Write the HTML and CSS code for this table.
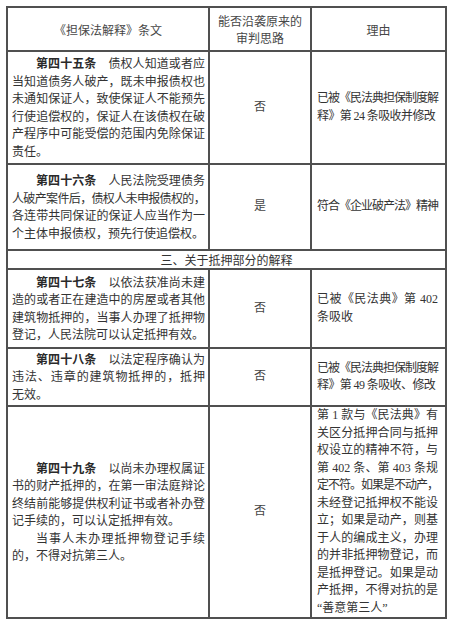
FILE: index.html
```html
<!DOCTYPE html>
<html lang="zh-CN">
<head>
<meta charset="utf-8">
<title>担保法解释条文对照</title>
<link rel="stylesheet" href="styles.css">
</head>
<body>
<div class="sheet">
<table class="grid">
  <colgroup><col class="c1"><col class="c2"><col class="c3"></colgroup>
  <tr class="row-head">
    <th>《担保法解释》条文</th>
    <th>能否沿袭原来的<br>审判思路</th>
    <th>理由</th>
  </tr>
  <tr class="row-45">
    <td class="art">
      <span class="ln ind"><b>第四十五条</b>　债权人知道或者应</span>
      <span class="ln">当知道债务人破产，既未申报债权也</span>
      <span class="ln">未通知保证人，致使保证人不能预先</span>
      <span class="ln">行使追偿权的，保证人在该债权在破</span>
      <span class="ln">产程序中可能受偿的范围内免除保证</span>
      <span class="ln end">责任。</span>
    </td>
    <td class="verdict">否</td>
    <td class="reason">
      <span class="ln t10">已被《民法典担保制度解</span>
      <span class="ln end t05">释》第 24 条吸收并修改</span>
    </td>
  </tr>
  <tr class="row-46">
    <td class="art">
      <span class="ln ind"><b>第四十六条</b>　人民法院受理债务</span>
      <span class="ln t07">人破产案件后，债权人未申报债权的，</span>
      <span class="ln">各连带共同保证的保证人应当作为一</span>
      <span class="ln end">个主体申报债权，预先行使追偿权。</span>
    </td>
    <td class="verdict">是</td>
    <td class="reason">
      <span class="ln t10">符合《企业破产法》精神</span>
    </td>
  </tr>
  <tr class="row-sec">
    <td class="section" colspan="3">三、关于抵押部分的解释</td>
  </tr>
  <tr class="row-47">
    <td class="art">
      <span class="ln ind"><b>第四十七条</b>　以依法获准尚未建</span>
      <span class="ln">造的或者正在建造中的房屋或者其他</span>
      <span class="ln">建筑物抵押的，当事人办理了抵押物</span>
      <span class="ln end">登记，人民法院可以认定抵押有效。</span>
    </td>
    <td class="verdict">否</td>
    <td class="reason">
      <span class="ln">已被《民法典》第 402</span>
      <span class="ln end">条吸收</span>
    </td>
  </tr>
  <tr class="row-48">
    <td class="art">
      <span class="ln ind"><b>第四十八条</b>　以法定程序确认为</span>
      <span class="ln">违法、违章的建筑物抵押的，抵押</span>
      <span class="ln end">无效。</span>
    </td>
    <td class="verdict">否</td>
    <td class="reason">
      <span class="ln t10">已被《民法典担保制度解</span>
      <span class="ln end t05">释》第 49 条吸收、修改</span>
    </td>
  </tr>
  <tr class="row-49">
    <td class="art">
      <span class="ln ind"><b>第四十九条</b>　以尚未办理权属证</span>
      <span class="ln">书的财产抵押的，在第一审法庭辩论</span>
      <span class="ln">终结前能够提供权利证书或者补办登</span>
      <span class="ln end">记手续的，可以认定抵押有效。</span>
      <span class="ln ind">当事人未办理抵押物登记手续</span>
      <span class="ln end">的，不得对抗第三人。</span>
    </td>
    <td class="verdict">否</td>
    <td class="reason">
      <span class="ln">第 1 款与《民法典》有</span>
      <span class="ln">关区分抵押合同与抵押</span>
      <span class="ln">权设立的精神不符，与</span>
      <span class="ln">第 402 条、第 403 条规</span>
      <span class="ln t10">定不符。如果是不动产，</span>
      <span class="ln">未经登记抵押权不能设</span>
      <span class="ln">立；如果是动产，则基</span>
      <span class="ln">于人的编成主义，办理</span>
      <span class="ln">的并非抵押物登记，而</span>
      <span class="ln">是抵押登记。如果是动</span>
      <span class="ln">产抵押，不得对抗的是</span>
      <span class="ln end">“善意第三人”</span>
    </td>
  </tr>
</table>
</div>
</body>
</html>
```

FILE: styles.css
```css
body {
  margin: 0;
  background: #ffffff;
  font-family: "Liberation Serif", "Noto Sans CJK SC", serif;
  color: #333333;
}

.sheet {
  padding: 6px 0 0 6px;
}

.grid {
  border-collapse: collapse;
  table-layout: fixed;
  width: 441px;
  font-size: 12px;
  line-height: 17.5px;
}

.c1 { width: 202px; }
.c2 { width: 102px; }
.c3 { width: 135px; }

.grid th,
.grid td {
  border: 2px solid #505050;
  padding: 0;
  vertical-align: middle;
}

.grid th {
  font-family: "Noto Sans CJK SC", sans-serif;
  font-weight: 400;
  color: #474747;
  text-align: center;
  line-height: 17px;
}

.row-head { height: 44px; }
.row-45 { height: 113px; }
.row-46 { height: 86px; }
.row-sec { height: 19px; }
.row-47 { height: 79px; }
.row-48 { height: 58px; }
.row-49 { height: 211px; }

.art {
  padding: 0 3px 0 4px !important;
}

.art b {
  font-family: "Noto Sans CJK SC", sans-serif;
  font-weight: 700;
  color: #2a2a2a;
}

.verdict {
  text-align: center;
  color: #444444;
}

.reason {
  padding: 0 7px 0 5px !important;
}

.section {
  font-family: "Noto Sans CJK SC", sans-serif;
  text-align: center;
  color: #333333;
  line-height: 15px;
}

.ln {
  display: block;
  text-align: justify;
  text-align-last: justify;
}

.ln.end {
  text-align-last: left;
}

.ln.ind {
  padding-left: 24px;
}

.t10 { letter-spacing: -1px; }
.t07 { letter-spacing: -0.7px; }
.t05 { letter-spacing: -0.6px; }
```
